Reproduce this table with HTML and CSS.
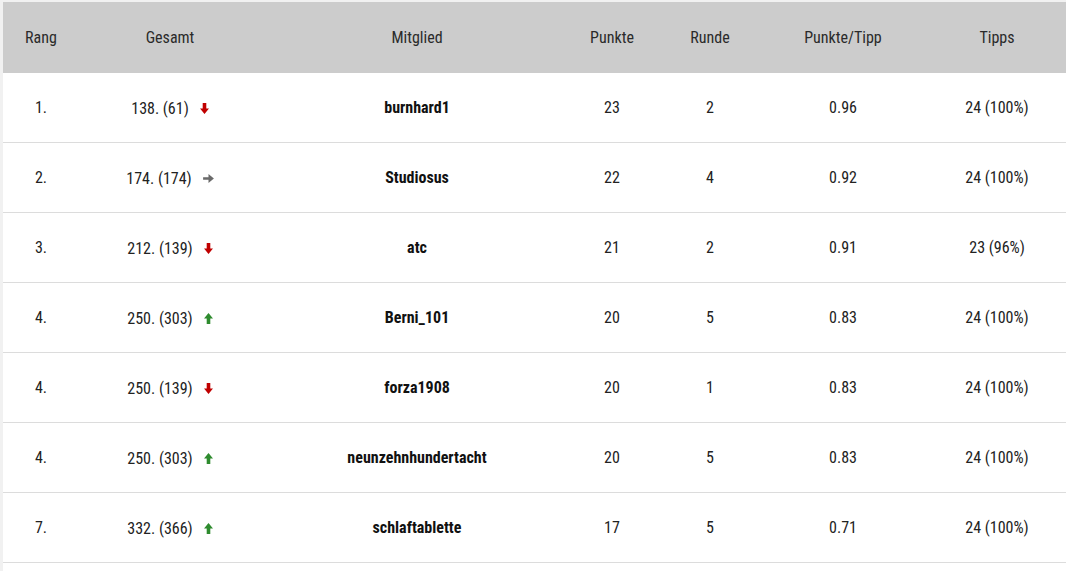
FILE: index.html
```html
<!DOCTYPE html>
<html lang="de">
<head>
<meta charset="utf-8">
<title>Tabelle</title>
<link rel="stylesheet" href="styles.css">
</head>
<body>
<div class="frame">
<table class="ranking">
  <colgroup>
    <col class="c-rang"><col class="c-gesamt"><col class="c-name"><col class="c-punkte"><col class="c-runde"><col class="c-ppt"><col class="c-tipps">
  </colgroup>
  <thead>
    <tr><th>Rang</th><th>Gesamt</th><th>Mitglied</th><th>Punkte</th><th>Runde</th><th>Punkte/Tipp</th><th>Tipps</th></tr>
  </thead>
  <tbody>
    <tr><td>1.</td><td><span class="tot">138. (61)</span><svg class="arr down" viewBox="0 0 10 12"><path d="M3 0h4v6h3l-5 6-5-6h3z"/></svg></td><td class="name">burnhard1</td><td>23</td><td>2</td><td>0.96</td><td>24 (100%)</td></tr>
    <tr><td>2.</td><td><span class="tot">174. (174)</span><svg class="arr same" viewBox="0 0 12 10"><path d="M0 3.5h6v-3.5l6 5-6 5v-3.5h-6z"/></svg></td><td class="name">Studiosus</td><td>22</td><td>4</td><td>0.92</td><td>24 (100%)</td></tr>
    <tr><td>3.</td><td><span class="tot">212. (139)</span><svg class="arr down" viewBox="0 0 10 12"><path d="M3 0h4v6h3l-5 6-5-6h3z"/></svg></td><td class="name">atc</td><td>21</td><td>2</td><td>0.91</td><td>23 (96%)</td></tr>
    <tr><td>4.</td><td><span class="tot">250. (303)</span><svg class="arr up" viewBox="0 0 10 12"><path d="M3 12h4v-6h3l-5-6-5 6h3z"/></svg></td><td class="name">Berni_101</td><td>20</td><td>5</td><td>0.83</td><td>24 (100%)</td></tr>
    <tr><td>4.</td><td><span class="tot">250. (139)</span><svg class="arr down" viewBox="0 0 10 12"><path d="M3 0h4v6h3l-5 6-5-6h3z"/></svg></td><td class="name">forza1908</td><td>20</td><td>1</td><td>0.83</td><td>24 (100%)</td></tr>
    <tr><td>4.</td><td><span class="tot">250. (303)</span><svg class="arr up" viewBox="0 0 10 12"><path d="M3 12h4v-6h3l-5-6-5 6h3z"/></svg></td><td class="name">neunzehnhundertacht</td><td>20</td><td>5</td><td>0.83</td><td>24 (100%)</td></tr>
    <tr><td>7.</td><td><span class="tot">332. (366)</span><svg class="arr up" viewBox="0 0 10 12"><path d="M3 12h4v-6h3l-5-6-5 6h3z"/></svg></td><td class="name">schlaftablette</td><td>17</td><td>5</td><td>0.71</td><td>24 (100%)</td></tr>
  </tbody>
</table>
</div>
</body>
</html>
```
FILE: styles.css
```css
html, body {
  margin: 0;
  padding: 0;
  height: 100%;
  background: #f1f1f1;
  overflow: hidden;
}
body {
  font-family: Roboto, "Liberation Sans", sans-serif;
  font-stretch: 80%;
  font-size: 16px;
  color: #222;
}
.frame {
  margin: 2px 0 0 3px;
  width: 1074px;
  height: calc(100% - 2px);
  overflow: hidden;
  background: #fff;
}
.ranking {
  border-collapse: collapse;
  table-layout: fixed;
  width: 1074px;
  background: #fff;
}
.c-rang { width: 76px; }
.c-gesamt { width: 182px; }
.c-name { width: 312px; }
.c-punkte { width: 78px; }
.c-runde { width: 118px; }
.c-ppt { width: 148px; }
.c-tipps { width: 160px; }
.ranking th {
  background: #cccccc;
  height: 71px;
  font-weight: 400;
  color: #2a2a2a;
  text-align: center;
  padding: 0;
  vertical-align: middle;
}
.ranking td {
  height: 69px;
  border-bottom: 1px solid #dcdcdc;
  text-align: center;
  padding: 0;
  vertical-align: middle;
}
.ranking td.name {
  font-weight: 700;
  color: #111;
}
.tot {
  display: inline-block;
  vertical-align: middle;
}
.arr {
  display: inline-block;
  vertical-align: middle;
  margin-left: 11px;
  width: 9px;
  height: 11px;
}
.arr.same {
  width: 11px;
  height: 9px;
}
.arr.down { fill: #c00000; }
.arr.up { fill: #2e8b2e; }
.arr.same { fill: #6a6a6a; }
```
